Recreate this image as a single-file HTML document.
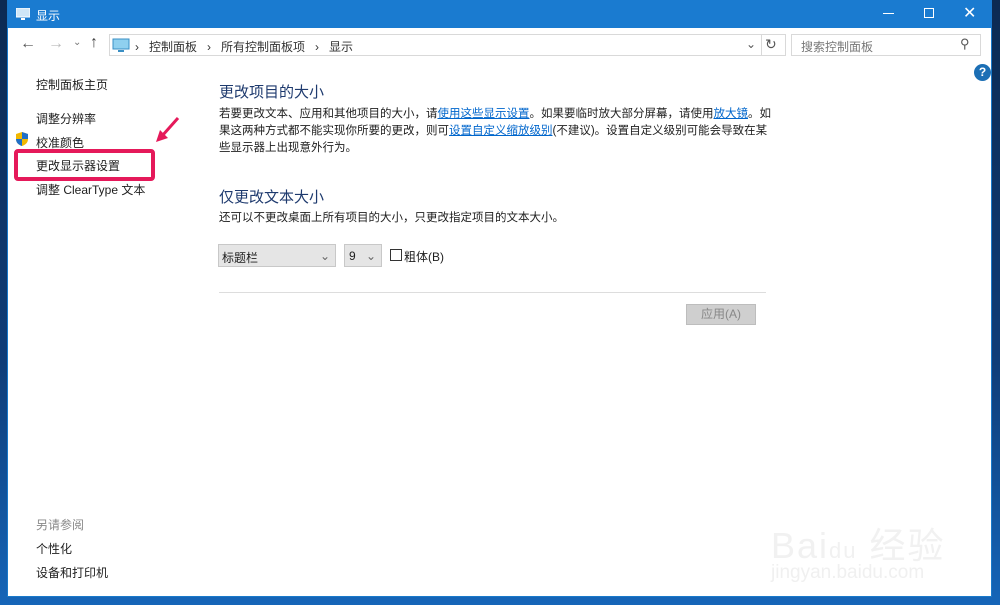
<!DOCTYPE html>
<html><head><meta charset="utf-8">
<style>
*{margin:0;padding:0;box-sizing:border-box}
body{width:1000px;height:605px;overflow:hidden;background:linear-gradient(180deg,#0c2a52,#0f3d78 60%,#1565b8);font-family:"Liberation Sans","Noto Sans CJK SC",sans-serif;font-size:12px;color:#1e1e1e;position:relative}
.win{position:absolute;left:7px;top:0;width:985px;height:597px;background:#fff;border:1px solid #1979ca;border-top:none}
.title{position:absolute;left:0;top:0;width:984px;height:28px;background:#1a7bd0;color:#fff;font-size:12px}
.abs{position:absolute}
a.l{color:#0066cc;text-decoration:underline}
.side{position:absolute;left:28px;font-size:12px;color:#1e1e1e}
.h{color:#1e3a6e;font-size:15px}
</style></head><body>
<div class="win">
 <div class="title">
  <svg class="abs" style="left:8px;top:8px" width="14" height="12"><rect x="0" y="0" width="14" height="9" fill="#cfe6f7" stroke="#fff"/><rect x="5" y="10" width="4" height="2" fill="#fff"/></svg>
  <div class="abs" style="left:28px;top:7px">显示</div>
  <div class="abs" style="left:875px;top:13px;width:11px;height:1px;background:#fff"></div>
  <div class="abs" style="left:916px;top:8px;width:10px;height:10px;border:1px solid #fff"></div>
  <div class="abs" style="left:955px;top:3px;font-size:16px">✕</div>
 </div>
 <div class="abs" style="left:12px;top:35px;color:#555;font-size:16px">←</div>
 <div class="abs" style="left:40px;top:35px;color:#bbb;font-size:16px">→</div>
 <div class="abs" style="left:65px;top:37px;color:#777;font-size:10px">⌄</div>
 <div class="abs" style="left:82px;top:34px;color:#444;font-size:16px">↑</div>
 <div class="abs" style="left:101px;top:34px;width:677px;height:22px;border:1px solid #d9d9d9"></div>
 <svg class="abs" style="left:104px;top:38px" width="18" height="14"><rect x="1" y="1" width="16" height="10" fill="#8fd0ef" stroke="#3a8fc4"/><rect x="6" y="12" width="6" height="2" fill="#3a8fc4"/></svg>
 <div class="abs" style="left:127px;top:38px;color:#333">›&nbsp;&nbsp; 控制面板 &nbsp;&nbsp;›&nbsp;&nbsp; 所有控制面板项 &nbsp;&nbsp;›&nbsp;&nbsp; 显示</div>
 <div class="abs" style="left:738px;top:37px;color:#555">⌄</div>
 <div class="abs" style="left:753px;top:34px;width:1px;height:22px;background:#d9d9d9"></div>
 <div class="abs" style="left:757px;top:36px;color:#555;font-size:14px">↻</div>
 <div class="abs" style="left:783px;top:34px;width:190px;height:22px;border:1px solid #d9d9d9"></div>
 <div class="abs" style="left:793px;top:38px;color:#777">搜索控制面板</div>
 <div class="abs" style="left:952px;top:36px;color:#555;font-size:13px">⚲</div>
 <div class="abs" style="left:966px;top:64px;width:17px;height:17px;border-radius:50%;background:#1c6fb5;color:#fff;font-weight:bold;text-align:center;line-height:17px;font-size:12px">?</div>
 <div class="side" style="top:76px">控制面板主页</div>
 <div class="side" style="top:110px">调整分辨率</div>
 <svg class="abs" style="left:7px;top:131px" width="14" height="16"><path d="M7 1 L13 3 V8 C13 12 10 14 7 15 C4 14 1 12 1 8 V3Z" fill="#f2b800"/><path d="M7 1 L13 3 V8 H7Z M7 8 V15 C4 14 1 12 1 8Z" fill="#1f6fc9"/></svg>
 <div class="side" style="top:134px">校准颜色</div>
 <div class="abs" style="left:6px;top:149px;width:141px;height:32px;border:4px solid #e5195a;border-radius:4px"></div>
 <div class="side" style="top:157px">更改显示器设置</div>
 <div class="side" style="top:181px">调整 ClearType 文本</div>
 <svg class="abs" style="left:140px;top:112px" width="40" height="40"><path d="M30 6 L14 24" stroke="#e5195a" stroke-width="3"/><path d="M8 30 L12 18 L20 26Z" fill="#e5195a"/></svg>
 <div class="side" style="top:516px;color:#888">另请参阅</div>
 <div class="side" style="top:540px">个性化</div>
 <div class="side" style="top:564px">设备和打印机</div>
 <div class="abs h" style="left:211px;top:81px">更改项目的大小</div>
 <div class="abs" style="left:211px;top:106px;width:552px;line-height:17px;font-size:11.5px">若要更改文本、应用和其他项目的大小，请<a class="l">使用这些显示设置</a>。如果要临时放大部分屏幕，请使用<a class="l">放大镜</a>。如果这两种方式都不能实现你所要的更改，则可<a class="l">设置自定义缩放级别</a>(不建议)。设置自定义级别可能会导致在某些显示器上出现意外行为。</div>
 <div class="abs h" style="left:211px;top:186px">仅更改文本大小</div>
 <div class="abs" style="left:211px;top:209px;font-size:11.5px">还可以不更改桌面上所有项目的大小，只更改指定项目的文本大小。</div>
 <div class="abs" style="left:210px;top:244px;width:118px;height:23px;background:#e5e5e5;border:1px solid #c8c8c8;padding:4px 3px">标题栏<span style="position:absolute;right:5px;color:#666">⌄</span></div>
 <div class="abs" style="left:336px;top:244px;width:38px;height:23px;background:#e5e5e5;border:1px solid #c8c8c8;padding:4px 4px">9<span style="position:absolute;right:5px;color:#666">⌄</span></div>
 <div class="abs" style="left:382px;top:249px;width:12px;height:12px;border:1px solid #333"></div>
 <div class="abs" style="left:396px;top:248px">粗体(B)</div>
 <div class="abs" style="left:211px;top:292px;width:547px;height:1px;background:#ddd"></div>
 <div class="abs" style="left:678px;top:304px;width:70px;height:21px;background:#cfcfcf;border:1px solid #bdbdbd;color:#888;text-align:center;line-height:19px">应用(A)</div>
 <div class="abs" style="left:763px;top:517px;color:#f1f1f1;font-size:36px;letter-spacing:2px">Bai<span style="font-size:22px">du</span> 经验</div>
 <div class="abs" style="left:763px;top:562px;color:#f0f0f0;font-size:19px">jingyan.baidu.com</div>
</div>
</body></html>
